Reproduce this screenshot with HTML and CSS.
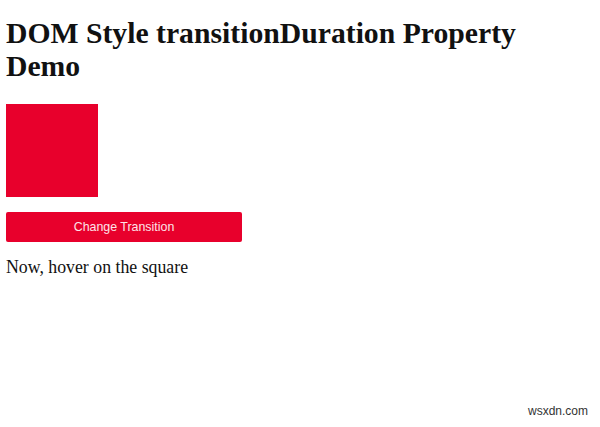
FILE: index.html
```html
<!DOCTYPE html>
<html>
<head>
<meta charset="utf-8">
<link rel="stylesheet" href="styles.css">
</head>
<body>
<h1 class="title">DOM Style transitionDuration Property Demo</h1>
<div class="square"></div>
<button class="btn">Change Transition</button>
<p class="note">Now, hover on the square</p>
<div class="mark">wsxdn.com</div>
</body>
</html>
```
FILE: styles.css
```css
html, body { height: 100%; }
body {
  margin: 0;
  padding: 0 6px;
  font-family: "Liberation Serif", "Times New Roman", serif;
  color: #111;
  background: #fff;
  position: relative;
  box-sizing: border-box;
}
.title {
  font-size: 29.7px;
  line-height: 33px;
  margin: 0;
  padding-top: 17px;
  width: 540px;
  font-weight: bold;
}
.square {
  width: 92px;
  height: 93px;
  background: #e8002c;
  margin-top: 21px;
}
.btn {
  display: block;
  width: 236px;
  height: 30px;
  margin-top: 15px;
  background: #e8002c;
  border: none;
  border-radius: 2px;
  color: #fde3e8;
  font-family: "Liberation Sans", Arial, sans-serif;
  font-size: 12.4px;
}
.note {
  margin: 15px 0 0;
  font-size: 17.8px;
}
.mark {
  position: absolute;
  right: 12px;
  bottom: 9px;
  font-family: "Liberation Sans", Arial, sans-serif;
  font-size: 12px;
  color: #333;
}
```
